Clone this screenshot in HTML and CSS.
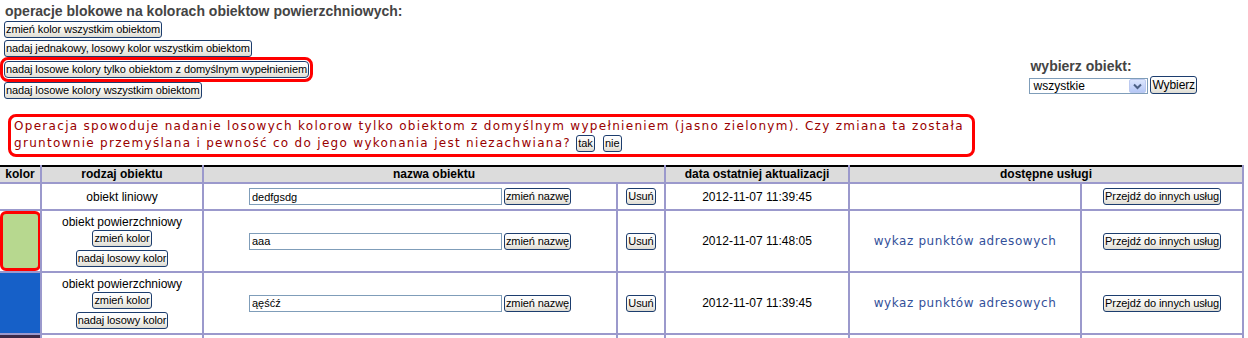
FILE: index.html
```html
<!DOCTYPE html>
<html lang="pl">
<head>
    <meta charset="UTF-8">
    <title>Obiekty</title>
    <link rel="stylesheet" href="styles.css">
</head>
<body>

<div class="top">
    <!-- operacje blokowe -->
    <div class="ops">
        <h3 class="ops-title">operacje blokowe na kolorach obiektow powierzchniowych:</h3>
        <button class="btn ops-btn">zmień kolor wszystkim obiektom</button>
        <button class="btn ops-btn">nadaj jednakowy, losowy kolor wszystkim obiektom</button>
        <button class="btn ops-btn ops-btn-active">nadaj losowe kolory tylko obiektom z domyślnym wypełnieniem</button>
        <button class="btn ops-btn">nadaj losowe kolory wszystkim obiektom</button>
    </div>

    <form class="picker">
        <div class="picker-title">wybierz obiekt:</div>
        <div class="picker-row">
            <span class="select-box">
                <select class="select">
                    <option>wszystkie</option>
                    <option>liniowe</option>
                    <option>powierzchniowe</option>
                </select>
                <span class="select-arrow">
                    <svg width="9" height="7" viewBox="0 0 9 7"><path d="M1 1.5 L4.5 5 L8 1.5" fill="none" stroke="#4d6185" stroke-width="2"/></svg>
                </span>
            </span>
            <button type="button" class="btn picker-btn">Wybierz</button>
        </div>
    </form>
</div>

<div class="notice">
    Operacja spowoduje nadanie losowych kolorow tylko obiektom z domyślnym wypełnieniem (jasno zielonym). Czy zmiana ta została
    gruntownie przemyślana i pewność co do jego wykonania jest niezachwiana?
    <button class="btn notice-btn">tak</button>
    <button class="btn notice-btn notice-btn-no">nie</button>
</div>

<table class="objects">
    <colgroup>
        <col style="width: 41px">
        <col style="width: 162px">
        <col style="width: 414px">
        <col style="width: 48px">
        <col style="width: 184px">
        <col style="width: 232px">
        <col style="width: 162px">
    </colgroup>
    <tr class="head">
        <th>kolor</th>
        <th>rodzaj obiektu</th>
        <th colspan="2">nazwa obiektu</th>
        <th>data ostatniej aktualizacji</th>
        <th colspan="2">dostępne usługi</th>
    </tr>
    <tr class="row-line">
        <td class="color-cell"></td>
        <td>obiekt liniowy</td>
        <td><input class="name-input" type="text" value="dedfgsdg"><button class="btn">zmień nazwę</button></td>
        <td><button class="btn">Usuń</button></td>
        <td>2012-11-07 11:39:45</td>
        <td></td>
        <td><button class="btn">Przejdź do innych usług</button></td>
    </tr>
    <tr class="row-area">
        <td class="color-cell"><div class="swatch swatch-picked" style="background: #b7d88f"></div></td>
        <td>
            obiekt powierzchniowy
            <button class="btn kind-btn">zmień kolor</button>
            <button class="btn kind-btn kind-btn-last">nadaj losowy kolor</button>
        </td>
        <td><input class="name-input" type="text" value="aaa"><button class="btn">zmień nazwę</button></td>
        <td><button class="btn">Usuń</button></td>
        <td>2012-11-07 11:48:05</td>
        <td><span class="service">wykaz punktów adresowych</span></td>
        <td><button class="btn">Przejdź do innych usług</button></td>
    </tr>
    <tr class="row-area">
        <td class="color-cell" style="background: #1660c8"></td>
        <td>
            obiekt powierzchniowy
            <button class="btn kind-btn">zmień kolor</button>
            <button class="btn kind-btn kind-btn-last">nadaj losowy kolor</button>
        </td>
        <td><input class="name-input" type="text" value="ąęśćź"><button class="btn">zmień nazwę</button></td>
        <td><button class="btn">Usuń</button></td>
        <td>2012-11-07 11:39:45</td>
        <td><span class="service">wykaz punktów adresowych</span></td>
        <td><button class="btn">Przejdź do innych usług</button></td>
    </tr>
    <tr class="row-area">
        <td class="color-cell" style="background: #3b2a48"></td>
        <td>
            obiekt powierzchniowy
            <button class="btn kind-btn">zmień kolor</button>
            <button class="btn kind-btn kind-btn-last">nadaj losowy kolor</button>
        </td>
        <td><input class="name-input" type="text" value="test"><button class="btn">zmień nazwę</button></td>
        <td><button class="btn">Usuń</button></td>
        <td>2012-11-07 11:39:45</td>
        <td><span class="service">wykaz punktów adresowych</span></td>
        <td><button class="btn">Przejdź do innych usług</button></td>
    </tr>
</table>

</body>
</html>
```

FILE: styles.css
```css
body {
    font-family: "Liberation Sans", Arial, sans-serif;
    font-size: 12px;
    margin: 0;
    padding: 3px 0 0 0;
    background-color: #fff;
    color: #000;
    overflow: hidden;
}
.top {
    display: flex;
    justify-content: space-between;
    padding: 0 51px 0 4px;
}
.ops-title, .picker-title {
    font-size: 14px;
    line-height: 16px;
    font-weight: bold;
    color: #444;
    margin: 0 0 1px 1px;
}
.btn {
    font-family: "Liberation Sans", Arial, sans-serif;
    font-size: 11px;
    line-height: 13px;
    letter-spacing: -0.1px;
    height: 17px;
    padding: 0 1px;
    border: 1px solid #1c3d6e;
    border-radius: 3px;
    background: linear-gradient(#ffffff, #f5f4f0 55%, #dedcd3);
    color: #000;
    cursor: pointer;
    vertical-align: middle;
}
.btn:hover {
    background: linear-gradient(#fff, #fbe7b8);
}
.ops-btn {
    display: block;
    margin: 2px 0;
}
.ops-btn-active {
    margin: 4px 0;
    outline: 3px solid #f00;
    outline-offset: 1px;
    border-radius: 4px;
}
.picker {
    margin-top: 55px;
}
.picker-title {
    margin-bottom: 2px;
}
.picker-row {
    display: flex;
    align-items: flex-end;
}
.select-box {
    display: inline-flex;
    align-items: center;
    width: 119px;
    height: 16px;
    box-sizing: border-box;
    border: 1px solid #7f9db9;
    background: #fff;
    margin-right: 2px;
}
.select {
    appearance: none;
    -webkit-appearance: none;
    border: none;
    outline: none;
    background: transparent;
    font-family: "Liberation Sans", Arial, sans-serif;
    font-size: 12px;
    padding: 0 0 0 3px;
    flex: 1;
    min-width: 0;
    height: 14px;
    line-height: 14px;
}
.select-arrow {
    display: flex;
    align-items: center;
    justify-content: center;
    width: 15px;
    height: 12px;
    margin-right: 1px;
    border: 1px solid #bccaf0;
    border-radius: 2px;
    background: linear-gradient(#dce6fd, #b6c8f6);
}
.picker-btn {
    font-size: 12px;
    height: 18px;
}
.notice {
    box-sizing: border-box;
    width: 967px;
    margin: 13px 0 0 8px;
    padding: 1px 3px 2px 3px;
    border: 3px solid #f00;
    border-radius: 8px;
    font-family: "DejaVu Sans", Verdana, sans-serif;
    font-size: 12px;
    line-height: 17px;
    letter-spacing: 1.3px;
    color: #900;
}
.notice-btn {
    letter-spacing: 0;
    padding: 0 1px;
}
.notice-btn-no {
    margin-left: 3px;
}
.objects {
    width: 1243px;
    table-layout: fixed;
    border-collapse: collapse;
    margin-top: 8px;
}
.objects th, .objects td {
    border: 2px solid #9b99cc;
    text-align: center;
    vertical-align: middle;
    padding: 0;
}
.objects tr > :first-child {
    border-left: none;
}
.objects th {
    border-top-color: #000;
    background: #dcdcdc;
    font-weight: bold;
    font-size: 12px;
    line-height: 15px;
}
.row-line td {
    height: 25px;
}
.row-area td {
    height: 60px;
}
.color-cell {
    padding: 0;
}
.swatch {
    height: 60px;
}
.swatch-picked {
    box-sizing: border-box;
    border: 3px solid #f00;
    border-radius: 6px;
    margin: 0 -1px 0 0;
}
.kind-btn {
    display: block;
    margin: 1px auto 0 auto;
}
.kind-btn-last {
    margin-top: 3px;
}
.name-input {
    box-sizing: border-box;
    width: 253px;
    height: 17px;
    border: 1px solid #7f9db9;
    padding: 0 2px;
    font-family: "Liberation Sans", Arial, sans-serif;
    font-size: 11px;
    vertical-align: middle;
    margin-right: 2px;
}
.service {
    font-family: "DejaVu Sans", Verdana, sans-serif;
    font-size: 12px;
    letter-spacing: 0.6px;
    color: #33509a;
}
```
